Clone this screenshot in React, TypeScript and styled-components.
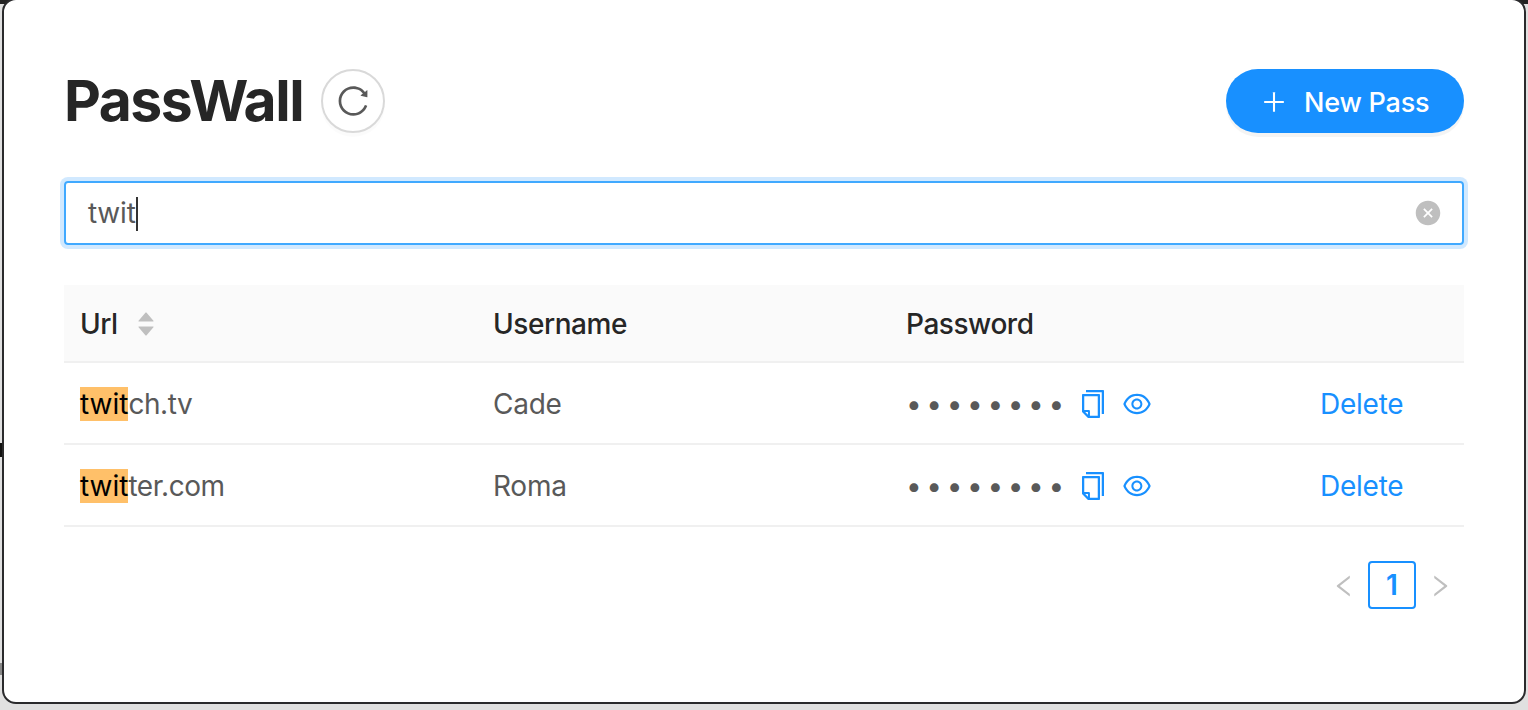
import React from "react";
import styled, { createGlobalStyle } from "styled-components";
import {
  AiOutlineReload,
  AiOutlinePlus,
  AiOutlineCopy,
  AiOutlineEye,
  AiOutlineLeft,
  AiOutlineRight,
  AiFillCloseCircle,
  AiFillCaretUp,
  AiFillCaretDown,
} from "react-icons/ai";

const GlobalStyle = createGlobalStyle`
  html, body {
    margin: 0;
    height: 100%;
    overflow: hidden;
    font-family: Inter, "Liberation Sans", sans-serif;
  }
  html {
    background:
      linear-gradient(#111, #111) 0 443px / 2px 14px no-repeat,
      linear-gradient(#888, #888) 0 663px / 2px 12px no-repeat,
      linear-gradient(#222, #222) 0 0 / 100% 4px no-repeat,
      #e0e0e0;
  }
  * { box-sizing: border-box; }
`;

const Window = styled.div`
  width: 1524px;
  height: 706px;
  margin: -2px 0 0 2px;
  padding: 69px 60px 0;
  background: #fff;
  border: 2px solid #2a2a2c;
  border-radius: 14px;
`;

const Header = styled.header`
  display: flex;
  align-items: center;
  justify-content: space-between;
  height: 64px;
`;

const TitleGroup = styled.div`
  display: flex;
  align-items: center;
  gap: 18px;
`;

const Title = styled.h1`
  margin: 0;
  font-size: 57px;
  font-weight: 700;
  line-height: 64px;
  color: #262626;
  letter-spacing: -1.5px;
`;

const RefreshButton = styled.button`
  display: flex;
  align-items: center;
  justify-content: center;
  width: 64px;
  height: 64px;
  padding: 0;
  font-size: 36px;
  color: #595959;
  background: #fff;
  border: 2px solid #d9d9d9;
  border-radius: 50%;
  box-shadow: 0 4px 0 rgba(0, 0, 0, 0.015);
`;

const NewButton = styled.button`
  display: flex;
  align-items: center;
  gap: 16px;
  width: 238px;
  height: 64px;
  padding: 2px 0 0 34px;
  font-family: inherit;
  font-size: 27px;
  font-weight: 500;
  letter-spacing: -0.2px;
  color: #fff;
  background: #1890ff;
  border: none;
  border-radius: 32px;
  box-shadow: 0 4px 0 rgba(0, 0, 0, 0.045);
  white-space: nowrap;

  svg {
    flex-shrink: 0;
    font-size: 28px;
  }
`;

const SearchBox = styled.div`
  display: flex;
  align-items: center;
  justify-content: space-between;
  height: 64px;
  margin-top: 48px;
  padding: 0 20px 0 22px;
  border: 2px solid #40a9ff;
  border-radius: 4px;
  box-shadow: 0 0 0 4px rgba(24, 144, 255, 0.2);
  font-size: 28px;
  letter-spacing: -0.2px;
  color: #595959;
`;

const Caret = styled.span`
  display: inline-block;
  width: 2px;
  height: 34px;
  vertical-align: -8px;
  background: #333;
`;

const ClearIcon = styled(AiFillCloseCircle)`
  font-size: 28px;
  color: #bfbfbf;
`;

const Table = styled.table`
  width: 1400px;
  margin-top: 40px;
  table-layout: fixed;
  border-collapse: separate;
  border-spacing: 0;
  font-size: 28px;
  letter-spacing: -0.25px;
  color: #595959;
`;

const HeadCell = styled.th`
  height: 78px;
  padding: 2px 16px 0;
  text-align: left;
  font-weight: 500;
  letter-spacing: -0.45px;
  color: #262626;
  background: #fafafa;
  border-bottom: 2px solid #f0f0f0;
`;

const Cell = styled.td`
  height: 82px;
  padding: 2px 16px 0;
  border-bottom: 2px solid #f0f0f0;
`;

const SortLabel = styled.div`
  display: flex;
  align-items: center;
  gap: 17px;
`;

const SortCarets = styled.span`
  display: flex;
  flex-direction: column;
  font-size: 22px;
  color: #bfbfbf;

  svg {
    display: block;
    margin: -4px 0;
  }
`;

const Mark = styled.mark`
  background: #ffc069;
  color: #000;
  padding: 0;
  letter-spacing: 0;
`;

const UrlRest = styled.span`
  letter-spacing: -0.45px;
`;

const PasswordRow = styled.div`
  display: flex;
  align-items: center;
`;

const Dots = styled.span`
  width: 171px;
  font-size: 28px;
  letter-spacing: 4.6px;
  white-space: nowrap;
`;

const IconButton = styled.span`
  display: flex;
  font-size: 32px;
  color: #1890ff;
  margin-right: 12px;
`;

const DeleteLink = styled.a`
  color: #1890ff;
  font-weight: 400;
`;

const Pagination = styled.nav`
  display: flex;
  align-items: center;
  justify-content: flex-end;
  gap: 10px;
  margin-top: 34px;
  padding-right: 10px;
`;

const PageArrow = styled.span`
  display: flex;
  padding-top: 2px;
  font-size: 28px;
  color: #bfbfbf;
`;

const PageNumber = styled.span`
  display: flex;
  align-items: center;
  justify-content: center;
  width: 48px;
  height: 48px;
  font-size: 28px;
  font-weight: 600;
  color: #1890ff;
  border: 2px solid #1890ff;
  border-radius: 4px;
`;

const rows = [
  { rest: "ch.tv", username: "Cade" },
  { rest: "ter.com", username: "Roma" },
];

export default function App() {
  return (
    <>
      <GlobalStyle />
      <Window>
        <Header>
          <TitleGroup>
            <Title>PassWall</Title>
            <RefreshButton>
              <AiOutlineReload />
            </RefreshButton>
          </TitleGroup>
          <NewButton>
            <AiOutlinePlus />
            New Pass
          </NewButton>
        </Header>

        <SearchBox>
          <span>
            twit
            <Caret />
          </span>
          <ClearIcon />
        </SearchBox>

        <Table>
          <colgroup>
            <col width="413" />
            <col width="413" />
            <col width="414" />
            <col width="160" />
          </colgroup>
          <thead>
            <tr>
              <HeadCell>
                <SortLabel>
                  Url
                  <SortCarets>
                    <AiFillCaretUp />
                    <AiFillCaretDown />
                  </SortCarets>
                </SortLabel>
              </HeadCell>
              <HeadCell>Username</HeadCell>
              <HeadCell>Password</HeadCell>
              <HeadCell />
            </tr>
          </thead>
          <tbody>
            {rows.map((row) => (
              <tr key={row.username}>
                <Cell>
                  <Mark>twit</Mark>
                  <UrlRest>{row.rest}</UrlRest>
                </Cell>
                <Cell>{row.username}</Cell>
                <Cell>
                  <PasswordRow>
                    <Dots>••••••••</Dots>
                    <IconButton>
                      <AiOutlineCopy />
                    </IconButton>
                    <IconButton>
                      <AiOutlineEye />
                    </IconButton>
                  </PasswordRow>
                </Cell>
                <Cell>
                  <DeleteLink>Delete</DeleteLink>
                </Cell>
              </tr>
            ))}
          </tbody>
        </Table>

        <Pagination>
          <PageArrow>
            <AiOutlineLeft />
          </PageArrow>
          <PageNumber>1</PageNumber>
          <PageArrow>
            <AiOutlineRight />
          </PageArrow>
        </Pagination>
      </Window>
    </>
  );
}
